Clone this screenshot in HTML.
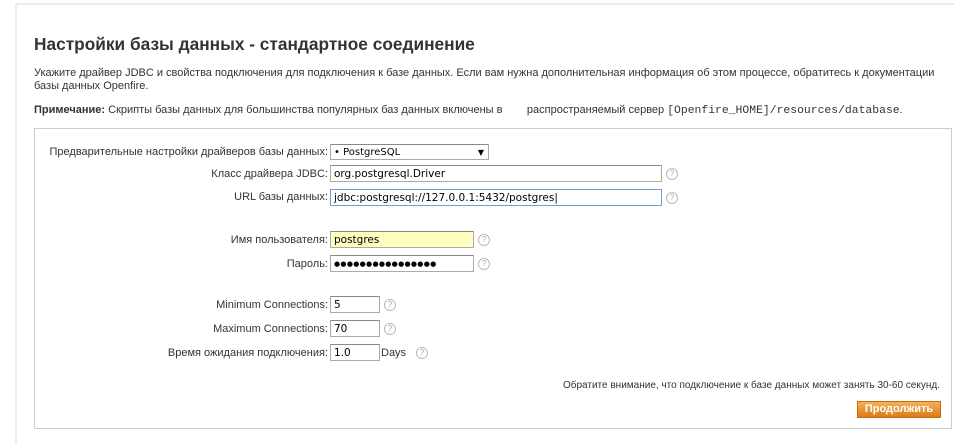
<!DOCTYPE html>
<html><head><meta charset="utf-8"><style>
body{margin:0;width:954px;height:432px;background:#fff;font-family:"Liberation Sans",Arial,sans-serif;font-size:11px;color:#333;position:relative;overflow:hidden}
.a{position:absolute;white-space:nowrap}
.frame{position:absolute;left:15px;top:3px;width:940px;height:440px;border-left:2px solid #eee;border-top:2px solid #ebebeb}
.box{position:absolute;left:34px;top:128px;width:916px;height:299px;border:1px solid #ccc}
.inp{position:absolute;border:1px solid #aaa;border-top-color:#888;background:#fff;height:14px;padding-top:1px;font-family:"DejaVu Sans",sans-serif;font-size:10.5px;line-height:15px;padding-left:3px;box-sizing:content-box;color:#000}
.lbl{position:absolute;text-align:right;right:626px;white-space:nowrap}
.q{position:absolute;width:10px;height:10px;border:1px solid #bbb;border-radius:50%;font-size:8px;line-height:10px;text-align:center;color:#aaa}
</style></head><body>
<div class="frame"></div>
<div class="a" style="left:34px;top:34px;font-size:17.3px;font-weight:bold;color:#333">Настройки базы данных - стандартное соединение</div>
<div class="a" style="left:34px;top:67px;line-height:13px">Укажите драйвер JDBC и свойства подключения для подключения к базе данных. Если вам нужна дополнительная информация об этом процессе, обратитесь к документации<br>базы данных Openfire.</div>
<div class="a" style="left:34px;top:104px"><b>Примечание:</b> Скрипты базы данных для большинства популярных баз данных включены в &nbsp; &nbsp; &nbsp; &nbsp;распространяемый сервер <span style="font-family:'Liberation Mono',monospace;font-size:11.4px">[Openfire_HOME]/resources/database</span>.</div>
<div class="box"></div>

<div class="lbl" style="top:146px">Предварительные настройки драйверов базы данных:</div>
<div class="inp" style="left:330px;top:144px;width:154px;height:13px;line-height:14px;font-size:10px">• PostgreSQL<span style="position:absolute;right:4px;font-size:8px">▼</span></div>

<div class="lbl" style="top:168px">Класс драйвера JDBC:</div>
<div class="inp" style="left:330px;top:165px;width:327px">org.postgresql.Driver</div>
<div class="q" style="left:666px;top:168px">?</div>

<div class="lbl" style="top:191px">URL базы данных:</div>
<div class="inp" style="left:330px;top:189px;width:327px;border-color:#6a9fd8">jdbc:postgresql://127.0.0.1:5432/postgres|</div>
<div class="q" style="left:666px;top:192px">?</div>

<div class="lbl" style="top:234px">Имя пользователя:</div>
<div class="inp" style="left:330px;top:231px;width:139px;background:#ffffc0">postgres</div>
<div class="q" style="left:478px;top:234px">?</div>

<div class="lbl" style="top:258px">Пароль:</div>
<div class="inp" style="left:330px;top:255px;width:139px;font-size:7px;letter-spacing:0.3px">●●●●●●●●●●●●●●●●</div>
<div class="q" style="left:478px;top:258px">?</div>

<div class="lbl" style="top:299px">Minimum Connections:</div>
<div class="inp" style="left:330px;top:296px;width:45px">5</div>
<div class="q" style="left:384px;top:299px">?</div>

<div class="lbl" style="top:323px">Maximum Connections:</div>
<div class="inp" style="left:330px;top:320px;width:45px">70</div>
<div class="q" style="left:384px;top:323px">?</div>

<div class="lbl" style="top:347px">Время ожидания подключения:</div>
<div class="inp" style="left:330px;top:344px;width:45px">1.0</div>
<div class="a" style="left:381px;top:347px">Days</div>
<div class="q" style="left:416px;top:347px">?</div>

<div class="a" style="right:14px;top:380px;font-size:10px">Обратите внимание, что подключение к базе данных может занять 30-60 секунд.</div>
<div class="a" style="left:857px;top:401px;width:84px;height:17px;background:linear-gradient(#f5b25a,#dc7a14);border:1px solid #c86a10;box-sizing:border-box;color:#fff;font-weight:bold;text-align:center;line-height:15px;font-size:11px">Продолжить</div>
</body></html>
